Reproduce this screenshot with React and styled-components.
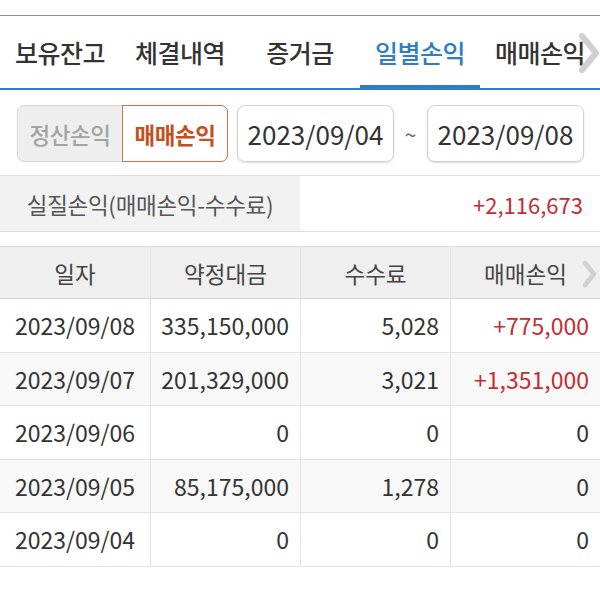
import React from "react";
import styled, { createGlobalStyle } from "styled-components";

const GlobalStyle = createGlobalStyle`
  body {
    margin: 0;
    background: #fff;
    font-family: "Noto Sans CJK KR", "Noto Sans", sans-serif;
    color: #333;
  }
`;

const Page = styled.div`
  width: 600px;
  padding-top: 15px;
`;

const TabBar = styled.div`
  position: relative;
  display: grid;
  grid-template-columns: repeat(5, 120px);
  height: 72px;
  border-top: 1px solid #8c8c8c;
  border-bottom: 2px solid #2d7dc9;
  overflow: hidden;
`;

const Tab = styled.div`
  display: flex;
  align-items: center;
  justify-content: center;
  font-size: 25px;
  font-weight: 500;
  letter-spacing: -0.5px;
  white-space: nowrap;
  color: ${(p) => (p.$active ? "#2d7dc9" : "#333")};
  box-shadow: ${(p) => (p.$active ? "inset 0 -3px 0 #2d7dc9" : "none")};
`;

const TabArrow = styled.svg`
  position: absolute;
  right: 0;
  top: 17px;
`;

const FilterRow = styled.div`
  display: flex;
  align-items: center;
  padding: 15px 16px 13px 17px;
  border-bottom: 1px solid #dcdcdc;
`;

const Segmented = styled.div`
  display: flex;
  width: 211px;
  height: 57px;
  box-sizing: border-box;
  border: 1px solid #d6d6d6;
  border-radius: 7px;
  background: #eeeeee;
`;

const Segment = styled.div`
  flex: 1;
  display: flex;
  align-items: center;
  justify-content: center;
  font-size: 22.5px;
  letter-spacing: -0.5px;
  font-weight: ${(p) => (p.$active ? 700 : 500)};
  color: ${(p) => (p.$active ? "#c4511d" : "#a3a3a3")};
  background: ${(p) => (p.$active ? "#fff" : "transparent")};
  border: ${(p) => (p.$active ? "1px solid #c9744a" : "none")};
  border-radius: ${(p) => (p.$active ? "0 7px 7px 0" : "7px 0 0 7px")};
  margin: ${(p) => (p.$active ? "-1px -1px -1px 0" : "0")};
`;

const DateBox = styled.div`
  width: 157px;
  height: 57px;
  box-sizing: border-box;
  margin-left: ${(p) => p.$ml || 0}px;
  display: flex;
  align-items: center;
  justify-content: center;
  border: 1px solid #d2d2d2;
  border-radius: 8px;
  box-shadow: 0 1px 2px rgba(0, 0, 0, 0.14);
  font-size: 26px;
  color: #333;
`;

const Tilde = styled.div`
  width: 33px;
  text-align: center;
  font-size: 21px;
  color: #666;
`;

const Summary = styled.div`
  display: grid;
  grid-template-columns: 300px 1fr;
  height: 55px;
  border-bottom: 1px solid #dcdcdc;
`;

const SummaryLabel = styled.div`
  display: flex;
  align-items: center;
  justify-content: center;
  background: #f2f2f2;
  font-size: 22.5px;
  letter-spacing: -0.3px;
  color: #555;
`;

const SummaryValue = styled.div`
  display: flex;
  align-items: center;
  justify-content: flex-end;
  padding-right: 17px;
  font-size: 22px;
  color: #c32d33;
`;

const Table = styled.div`
  margin-top: 14px;
  border-top: 1px solid #dcdcdc;
`;

const Row = styled.div`
  position: relative;
  display: grid;
  grid-template-columns: repeat(4, 150px);
  height: ${(p) => (p.$head ? 51 : 52.5)}px;
  border-bottom: 1px solid ${(p) => (p.$head ? "#d6d6d6" : "#e4e4e4")};
  background: ${(p) => (p.$head ? "#efefef" : p.$alt ? "#f8f8f8" : "#fff")};
`;

const Cell = styled.div`
  display: flex;
  align-items: center;
  justify-content: ${(p) => (p.$center ? "center" : "flex-end")};
  padding-right: ${(p) => (p.$center ? 0 : 11)}px;
  border-left: ${(p) => (p.$first ? "none" : "1px solid #e4e4e4")};
  font-size: ${(p) => (p.$head ? 22.5 : 23)}px;
  white-space: nowrap;
  color: ${(p) => (p.$red ? "#c32d33" : p.$head ? "#444" : "#333")};
`;

const HeadArrow = styled.svg`
  position: absolute;
  right: 2px;
  top: 13px;
`;

const rows = [
  ["2023/09/08", "335,150,000", "5,028", "+775,000"],
  ["2023/09/07", "201,329,000", "3,021", "+1,351,000"],
  ["2023/09/06", "0", "0", "0"],
  ["2023/09/05", "85,175,000", "1,278", "0"],
  ["2023/09/04", "0", "0", "0"],
];

const tabs = ["보유잔고", "체결내역", "증거금", "일별손익", "매매손익"];

function App() {
  return (
    <Page>
      <GlobalStyle />
      <TabBar>
        {tabs.map((t) => (
          <Tab key={t} $active={t === "일별손익"}>
            {t}
          </Tab>
        ))}
        <TabArrow width="22" height="40" viewBox="0 0 22 40">
          <polyline
            points="4,3 18,20 4,37"
            fill="none"
            stroke="#d0d0d0"
            strokeWidth="6"
            strokeLinejoin="round"
            strokeLinecap="round"
          />
        </TabArrow>
      </TabBar>

      <FilterRow>
        <Segmented>
          <Segment>정산손익</Segment>
          <Segment $active>매매손익</Segment>
        </Segmented>
        <DateBox $ml={9}>2023/09/04</DateBox>
        <Tilde>~</Tilde>
        <DateBox>2023/09/08</DateBox>
      </FilterRow>

      <Summary>
        <SummaryLabel>실질손익(매매손익-수수료)</SummaryLabel>
        <SummaryValue>+2,116,673</SummaryValue>
      </Summary>

      <Table>
        <Row $head>
          <Cell $head $center $first>일자</Cell>
          <Cell $head $center>약정대금</Cell>
          <Cell $head $center>수수료</Cell>
          <Cell $head $center>매매손익</Cell>
          <HeadArrow width="16" height="28" viewBox="0 0 16 28">
            <polyline
              points="3,3 12,14 3,25"
              fill="none"
              stroke="#d0d0d0"
              strokeWidth="4.5"
              strokeLinejoin="round"
              strokeLinecap="round"
            />
          </HeadArrow>
        </Row>
        {rows.map((r, i) => (
          <Row key={r[0]} $alt={i % 2 === 1}>
            <Cell $center $first>{r[0]}</Cell>
            <Cell>{r[1]}</Cell>
            <Cell>{r[2]}</Cell>
            <Cell $red={r[3].startsWith("+")}>{r[3]}</Cell>
          </Row>
        ))}
      </Table>
    </Page>
  );
}

export default App;
